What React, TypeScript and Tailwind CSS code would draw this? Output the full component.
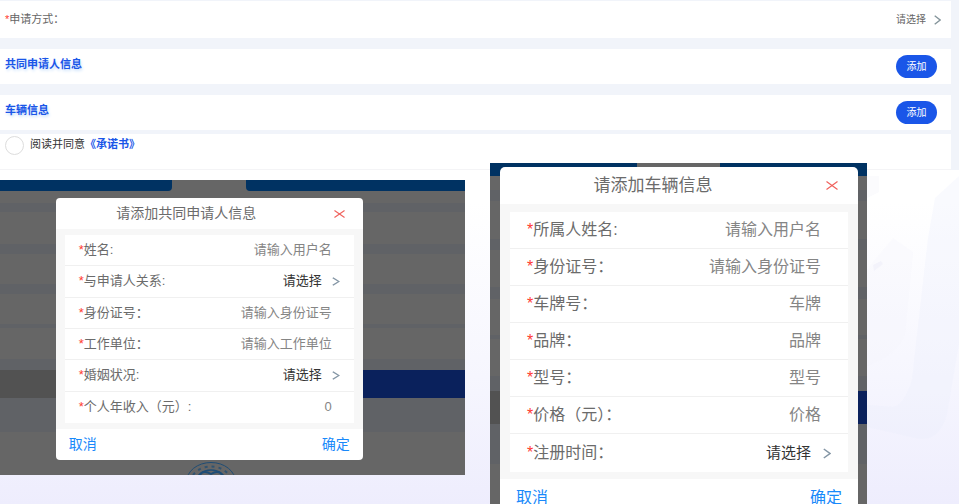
import { useId } from "react"
import type { ReactNode } from "react"
import clsx from "clsx"

type Field = {
  label: string
  kind: "input" | "select"
  placeholder: string
}

type Size = "sm" | "lg"

const applicantFields: Field[] = [
  { label: "姓名:", kind: "input", placeholder: "请输入用户名" },
  { label: "与申请人关系:", kind: "select", placeholder: "请选择" },
  { label: "身份证号：", kind: "input", placeholder: "请输入身份证号" },
  { label: "工作单位：", kind: "input", placeholder: "请输入工作单位" },
  { label: "婚姻状况:", kind: "select", placeholder: "请选择" },
  { label: "个人年收入（元）:", kind: "input", placeholder: "0" },
]

const vehicleFields: Field[] = [
  { label: "所属人姓名:", kind: "input", placeholder: "请输入用户名" },
  { label: "身份证号：", kind: "input", placeholder: "请输入身份证号" },
  { label: "车牌号：", kind: "input", placeholder: "车牌" },
  { label: "品牌：", kind: "input", placeholder: "品牌" },
  { label: "型号：", kind: "input", placeholder: "型号" },
  { label: "价格（元）：", kind: "input", placeholder: "价格" },
  { label: "注册时间：", kind: "select", placeholder: "请选择" },
]

function Chevron({ className }: { className?: string }) {
  return (
    <svg
      viewBox="0 0 8 12"
      preserveAspectRatio="none"
      fill="none"
      stroke="currentColor"
      strokeWidth="1.5"
      className={className}
      aria-hidden="true"
    >
      <path d="M0.8 1 L7 6 L0.8 11" />
    </svg>
  )
}

function Picker({ id, text, className }: { id: string; text: string; className?: string }) {
  return (
    <select id={id} className={clsx("appearance-none bg-transparent outline-none [field-sizing:content]", className)}>
      <option>{text}</option>
    </select>
  )
}

function FieldRow({ field, size }: { field: Field; size: Size }) {
  const id = useId()
  const sm = size === "sm"

  return (
    <div
      className={clsx(
        "flex items-center border-b border-[#f0f0f0] last:border-b-0",
        sm ? "pl-[14px] text-[13px] leading-4" : "h-[37px] pl-[17px] text-[16px] leading-5 last:h-[38px]",
        field.kind === "select" ? (sm ? "pr-[14px]" : "pr-[17px]") : sm ? "pr-[22px]" : "pr-[27px]"
      )}
    >
      <label htmlFor={id} className="shrink-0 text-[#6b6b6b]">
        <span className="text-[#ff3b30]">*</span>
        {field.label}
      </label>
      {field.kind === "input" ? (
        <input
          id={id}
          placeholder={field.placeholder}
          className="min-w-0 flex-1 bg-transparent text-right outline-none placeholder:text-[#858585]"
        />
      ) : (
        <div className={clsx("ml-auto flex items-center text-[#333]", sm ? "gap-[10px] text-[13px]" : "gap-3 text-[15px]")}>
          <Picker id={id} text={field.placeholder} />
          <Chevron className={clsx("w-2 text-[#8496a5]", sm ? "h-[9px]" : "h-[11px]")} />
        </div>
      )}
    </div>
  )
}

function FormDialog({ title, fields, size }: { title: string; fields: Field[]; size: Size }) {
  const sm = size === "sm"

  return (
    <div
      role="dialog"
      aria-label={title}
      className={clsx("overflow-hidden bg-white", sm ? "rounded-[4px]" : "rounded-[5px]")}
    >
      <div className={clsx("flex items-center", sm ? "h-[31px]" : "h-[37px]")}>
        <h3 className={clsx("flex-1 text-center text-[#6b6b6b]", sm ? "text-[14px]" : "text-[17px]")}>{title}</h3>
        <button type="button" aria-label="关闭" className={clsx("flex justify-center text-[#f0625d]", sm ? "w-[46px]" : "w-[52px]")}>
          <svg
            viewBox="0 0 12 9"
            preserveAspectRatio="none"
            fill="none"
            stroke="currentColor"
            strokeWidth="1.2"
            className={sm ? "h-2 w-[11px]" : "h-[9px] w-3"}
          >
            <path d="M0.5 0.5 L11.5 8.5 M11.5 0.5 L0.5 8.5" />
          </svg>
        </button>
      </div>
      <div className={clsx("bg-[#f7f7f7]", sm ? "px-[9px] py-[6px]" : "px-[10px] pt-2 pb-[7px]")}>
        <div className={clsx("bg-white", sm && "grid h-[188px] grid-rows-6")}>
          {fields.map((f) => (
            <FieldRow key={f.label} field={f} size={size} />
          ))}
        </div>
      </div>
      <div
        className={clsx(
          "flex items-center justify-between text-[#1989fa]",
          sm ? "h-[31px] px-[13px] text-[14px]" : "h-[37px] px-4 text-[16px]"
        )}
      >
        <button type="button">取消</button>
        <button type="button">确定</button>
      </div>
    </div>
  )
}

/* School seal peeking out at the bottom of the dimmed page */
function Seal() {
  return (
    <svg viewBox="0 0 50 13" fill="none" stroke="#1f4d75" className="mt-auto ml-[40%] h-[13px] w-[50px]" aria-hidden="true">
      <ellipse cx="25" cy="20" rx="24.5" ry="19.5" strokeWidth="1" />
      <ellipse cx="25" cy="20" rx="20" ry="15.5" strokeWidth="2" strokeDasharray="3 4" opacity="0.75" />
      <ellipse cx="25" cy="20" rx="15" ry="12" strokeWidth="1.4" />
      <path d="M14 13 C16 9 21 9.5 25 12 C29 9.5 34 9 36 13" strokeWidth="2" />
    </svg>
  )
}

function Backdrop({ size }: { size: Size }) {
  if (size === "sm") {
    return (
      <div className="flex flex-col bg-[#666] [grid-area:1/1]" aria-hidden="true">
        <div className="flex h-[11px] justify-between">
          <div className="w-[37%] rounded-br-[4px] bg-[#003262]" />
          <div className="w-[47%] rounded-bl-[4px] bg-[#003262]" />
        </div>
        <div className="mt-3 h-[9px] bg-[#606266]" />
        <div className="mt-8 h-[10px] bg-[#606266]" />
        <div className="mt-[30px] h-[10px] bg-[#606266]" />
        <div className="mt-[30px] h-1 bg-[#606266]" />
        <div className="mt-[31px] h-[11px] bg-[#606266]" />
        <div className="flex h-7">
          <div className="flex-1 bg-[#525252]" />
          <div className="flex-1 bg-[#0a215c]" />
        </div>
        <div className="h-[34px] bg-[#606266]" />
        <Seal />
      </div>
    )
  }

  return (
    <div className="flex flex-col bg-[#666] [grid-area:1/1]" aria-hidden="true">
      <div className="flex h-[13px] justify-between">
        <div className="w-[39%] bg-[#003262]" />
        <div className="w-[39%] bg-[#003262]" />
      </div>
      <div className="mt-[14px] h-[11px] bg-[#606266]" />
      <div className="mt-[38px] h-[11px] bg-[#606266]" />
      <div className="mt-[37px] h-3 bg-[#606266]" />
      <div className="mt-9 h-1 bg-[#606266]" />
      <div className="mt-[37px] h-[15px] bg-[#606266]" />
      <div className="flex h-[33px]">
        <div className="flex-1 bg-[#525252]" />
        <div className="flex-1 bg-[#0a215c]" />
      </div>
      <div className="h-10 bg-[#606266]" />
    </div>
  )
}

function SectionRow({ title }: { title: string }) {
  return (
    <div className="flex h-[35px] justify-between bg-white pr-[14px] pl-[5px]">
      <h2 className="mt-[7px] text-[11px] leading-4 font-bold text-[#1a56e8] [text-shadow:1px_2px_3px_#c8dffa]">{title}</h2>
      <button type="button" className="mt-[6px] h-[23px] w-[41px] rounded-full bg-[#1a56e8] text-[10px] text-white">
        添加
      </button>
    </div>
  )
}

function Card({ children, className }: { children: ReactNode; className?: string }) {
  return <div className={clsx("flex bg-white pl-[5px] text-[11px]", className)}>{children}</div>
}

export default function App() {
  return (
    <div className="relative h-screen overflow-hidden bg-linear-to-b from-white from-40% via-[#f6f6fe] via-75% to-[#eeedfd] font-['Liberation_Sans','Noto_Sans_CJK_SC',sans-serif]">
      {/* faint shapes behind the right edge */}
      <svg viewBox="0 0 100 340" className="absolute right-0 bottom-0 h-[340px] w-[100px]" fill="none" aria-hidden="true">
        <path d="M8 12 H20 V28 L8 34 Z" fill="#f8f8fc" opacity="0.5" />
        <path d="M14 98 L34 74 L54 88 L46 170 Q40 190 8 202 V106 Z" fill="#f4f5fd" opacity="0.25" />
        <path
          d="M69 74 L53 215 Q46 240 34 243 L8 241 V263 L56 274 Q80 280 88 250 L100 180 V12 L76 34 Z"
          fill="#eaeefc"
          opacity="0.28"
        />
        <path d="M14 101 L22 97 L24 100 L15 107 Z" fill="#f1f1fa" opacity="0.8" />
      </svg>

      <form className="relative flex flex-col gap-[11px] bg-[#f1f4fa] pt-px pr-2">
        <Card className="h-[37px] items-center pr-[10px] text-[#666]">
          <label htmlFor="apply-way" className="flex-1">
            <span className="text-[#ff3b30]">*</span>申请方式：
          </label>
          <Picker id="apply-way" text="请选择" className="mr-2 text-[10px]" />
          <Chevron className="h-[10px] w-[7px] text-[#84949a]" />
        </Card>
        <SectionRow title="共同申请人信息" />
        <div className="flex flex-col gap-1">
          <SectionRow title="车辆信息" />
          <Card className="h-9 items-start border-b border-[#f4f4f6] pt-[2px]">
            <input
              id="agree"
              type="checkbox"
              className="size-[19px] appearance-none rounded-full border border-[#ddd] bg-white checked:bg-[#1a56e8]"
            />
            <label htmlFor="agree" className="ml-[6px] text-[#333]">
              阅读并同意
            </label>
            <a href="#promise" className="font-bold text-[#1a56e8]">
              《承诺书》
            </a>
          </Card>
        </div>
      </form>

      <div className="relative grid grid-cols-[465fr_377fr_67fr] items-start gap-x-[25px]">
        <div className="mt-[10px] grid h-[295px] items-start">
          <div className="grid h-full [grid-area:1/1]">
            <Backdrop size="sm" />
          </div>
          <div className="mt-[18px] mr-[22%] ml-[12%] [grid-area:1/1]">
            <FormDialog title="请添加共同申请人信息" fields={applicantFields} size="sm" />
          </div>
        </div>
        <div className="-mt-[7px] grid">
          <Backdrop size="lg" />
          <div className="mt-1 mr-[9px] ml-[10px] [grid-area:1/1]">
            <FormDialog title="请添加车辆信息" fields={vehicleFields} size="lg" />
          </div>
        </div>
      </div>
    </div>
  )
}
